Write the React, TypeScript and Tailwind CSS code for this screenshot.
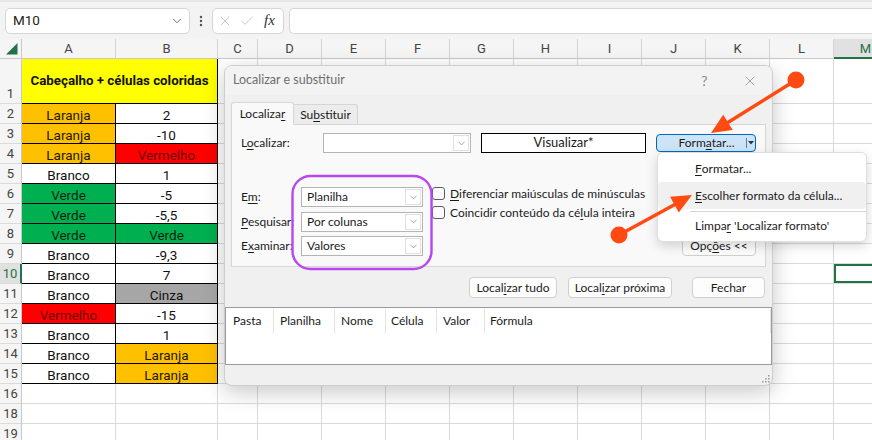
import type { ReactNode } from "react";
import { Check, ChevronDown, EllipsisVertical, X } from "lucide-react";

const U = ({ children }: { children: ReactNode }) => (
  <span className="underline decoration-1 underline-offset-[2px]">{children}</span>
);

const COLS = [
  { k: "A", w: "w-[94px]" },
  { k: "B", w: "w-[102px]" },
  { k: "C", w: "w-[40px]" },
  { k: "D", w: "w-[64px]" },
  { k: "E", w: "w-[64px]" },
  { k: "F", w: "w-[64px]" },
  { k: "G", w: "w-[64px]" },
  { k: "H", w: "w-[64px]" },
  { k: "I", w: "w-[64px]" },
  { k: "J", w: "w-[64px]" },
  { k: "K", w: "w-[64px]" },
  { k: "L", w: "w-[64px]" },
  { k: "M", w: "w-[64px]" },
];
const REST = COLS.slice(2);

const FILL: Record<string, string> = {
  o: "bg-[#ffc000] text-[#231a00]",
  r: "bg-[#ff0000] text-[#6a0000]",
  g: "bg-[#00b050] text-[#072410]",
  w: "bg-white text-[#111]",
  c: "bg-[#a6a6a6] text-[#111]",
};

const DATA: [number, string, string, string, string][] = [
  [2, "Laranja", "o", "2", "w"],
  [3, "Laranja", "o", "-10", "w"],
  [4, "Laranja", "o", "Vermelho", "r"],
  [5, "Branco", "w", "1", "w"],
  [6, "Verde", "g", "-5", "w"],
  [7, "Verde", "g", "-5,5", "w"],
  [8, "Verde", "g", "Verde", "g"],
  [9, "Branco", "w", "-9,3", "w"],
  [10, "Branco", "w", "7", "w"],
  [11, "Branco", "w", "Cinza", "c"],
  [12, "Vermelho", "r", "-15", "w"],
  [13, "Branco", "w", "1", "w"],
  [14, "Branco", "w", "Laranja", "o"],
  [15, "Branco", "w", "Laranja", "o"],
];

function RowHead({ n, active }: { n: number; active?: boolean }) {
  return (
    <div
      className={`flex w-[22px] shrink-0 items-end justify-center border-b border-[#dadada] pb-[1px] text-[13px] leading-[16px] ${
        active
          ? "border-r-2 border-r-[#217346] bg-[#e1e1e1] text-[#217346]"
          : "border-r border-r-[#c8c8c8] bg-[#f5f5f5] text-[#444]"
      }`}
    >
      {n}
    </div>
  );
}

function EmptyCells({ row }: { row: number }) {
  return (
    <>
      {REST.map((c) => (
        <div
          key={c.k}
          className={`${c.w} shrink-0 border-r border-b border-[#dadada] ${
            row === 10 && c.k === "M" ? "shadow-[inset_0_0_0_2px_#217346]" : ""
          }`}
        />
      ))}
    </>
  );
}

function FormulaBar() {
  return (
    <div className="flex h-[39px] items-center border-t-2 border-[#e6e6e6] bg-[#f3f3f3] pl-[5px]">
      <div className="flex h-[26px] w-[185px] items-center justify-between rounded-[5px] border border-[#d6d6d6] bg-white pl-[7px] pr-[5px] text-[13.5px] text-[#222]">
        <span>M10</span>
        <ChevronDown size={14} strokeWidth={1.4} color="#555" />
      </div>
      <div className="flex w-[22px] justify-center">
        <EllipsisVertical size={14} strokeWidth={2.2} color="#555" />
      </div>
      <div className="flex h-[26px] w-[72px] items-center rounded-[5px] border border-[#d6d6d6] bg-white pl-[4px]">
        <X size={16} strokeWidth={1.1} color="#b4b4b4" />
        <Check size={16} strokeWidth={1.1} color="#b4b4b4" className="ml-[6px]" />
        <span className="ml-[9px] font-['Liberation_Serif',serif] text-[15px] italic text-[#333]">fx</span>
      </div>
      <div className="ml-[5px] h-[26px] flex-1 rounded-l-[5px] border border-r-0 border-[#d6d6d6] bg-white" />
    </div>
  );
}

function Sheet() {
  return (
    <div className="flex flex-col text-[13.5px]">
      <div className="flex h-[20px] bg-[#f5f5f5] text-[13px] text-[#444]">
        <div className="relative w-[22px] shrink-0 border-r border-b border-[#c8c8c8]">
          <svg className="absolute left-[6px] top-[4px]" width="12" height="12">
            <polygon points="0,11.5 11.5,0 11.5,11.5" fill="#217346" />
          </svg>
        </div>
        {COLS.map((c) => (
          <div
            key={c.k}
            className={`${c.w} flex shrink-0 items-center justify-center border-r border-[#d4d4d4] pt-[1px] ${
              c.k === "M"
                ? "border-b-2 border-b-[#217346] bg-[#e1e1e1] text-[#217346]"
                : "border-b border-b-[#c8c8c8]"
            }`}
          >
            {c.k}
          </div>
        ))}
      </div>

      <div className="flex h-[45px]">
        <RowHead n={1} />
        <div className="flex w-[196px] shrink-0 items-center justify-center border-r border-b border-black bg-[#ffff00] text-[13.3px] font-bold text-[#111]">
          Cabeçalho + células coloridas
        </div>
        <EmptyCells row={1} />
      </div>

      {DATA.map(([n, a, fa, b, fb]) => (
        <div key={n} className="flex h-[20px]">
          <RowHead n={n} active={n === 10} />
          <div className={`flex w-[94px] shrink-0 items-end justify-center border-r border-b border-black leading-[16px] ${FILL[fa]}`}>
            {a}
          </div>
          <div className={`flex w-[102px] shrink-0 items-end justify-center border-r border-b border-black leading-[16px] ${FILL[fb]}`}>
            {b}
          </div>
          <EmptyCells row={n} />
        </div>
      ))}

      {[16, 18, 19].map((n) => (
        <div key={n} className="flex h-[20px]">
          <RowHead n={n} />
          <div className="w-[94px] shrink-0 border-r border-b border-[#dadada]" />
          <div className="w-[102px] shrink-0 border-r border-b border-[#dadada]" />
          <EmptyCells row={n} />
        </div>
      ))}
    </div>
  );
}

function Select({ value }: { value: string }) {
  return (
    <div className="flex h-[20px] w-[122px] items-stretch border border-[#b4b4b4] bg-white">
      <div className="flex flex-1 items-center pl-[5px]">{value}</div>
      <div className="m-px flex w-[16px] items-center justify-center border border-[#e0e0e0]">
        <ChevronDown size={11} strokeWidth={1.3} color="#666" />
      </div>
    </div>
  );
}

function Checkbox({ children }: { children: ReactNode }) {
  return (
    <div className="flex h-[13px] items-center">
      <div className="h-[13px] w-[13px] shrink-0 rounded-[3px] border border-[#5c5c5c] bg-[#fbfbfb]" />
      <span className="ml-[5px] whitespace-nowrap">{children}</span>
    </div>
  );
}

function FindDialog() {
  return (
    <div className="absolute left-[224px] top-[65px] flex h-[321px] w-[549px] flex-col overflow-hidden rounded-[8px] border border-[#cdcdcd] bg-[#f0f0f0] font-['Lato',sans-serif] text-[12px] text-[#1b1b1b] shadow-[0_6px_22px_rgba(0,0,0,0.22)]">
      <div className="flex h-[29px] shrink-0 items-center bg-[#f3f3f3] pl-[8px] text-[12.5px] text-[#6e6e6e]">
        <span>Localizar e substituir</span>
        <div className="ml-auto flex h-full">
          <span className="flex w-[45px] items-center justify-center text-[14px] text-[#8a8a8a]">?</span>
          <span className="flex w-[45px] items-center justify-center">
            <X size={16} strokeWidth={1.1} color="#8a8a8a" />
          </span>
        </div>
      </div>

      <div className="flex flex-col pl-[6px]">
        <div className="mt-[7px] flex h-[22px] items-end">
          <div className="relative z-10 -mb-px flex h-[23px] w-[63px] items-center justify-center rounded-t-[3px] border border-b-0 border-[#d6d6d6] bg-[#f9f9f9]">
            Localiza<U>r</U>
          </div>
          <div className="flex h-[20px] w-[64px] items-center justify-center rounded-tr-[3px] border border-b-0 border-l-0 border-[#d6d6d6] bg-[#ececec]">
            Su<U>b</U>stituir
          </div>
        </div>

        <div className="h-[143px] w-[535px] border border-[#d6d6d6] bg-[#f9f9f9] pt-[8px]">
          <div className="flex h-[20px] items-center pl-[9px]">
            <span className="w-[82px]">
              L<U>o</U>calizar:
            </span>
            <div className="flex h-[20px] w-[148px] items-stretch border border-[#b4b4b4] bg-white">
              <div className="flex-1" />
              <div className="m-px flex w-[16px] items-center justify-center border border-[#e0e0e0]">
                <ChevronDown size={11} strokeWidth={1.3} color="#666" />
              </div>
            </div>
            <div className="ml-[10px] flex h-[20px] w-[165px] items-center justify-center border border-black bg-white text-[13px]">
              Visualizar*
            </div>
            <div className="ml-[10px] flex h-[18px] w-[100px] items-stretch rounded-[4px] border border-[#0067c0] bg-[#cce4f7]">
              <div className="flex flex-1 items-center justify-center pl-[10px]">
                Form<U>a</U>tar...
              </div>
              <div className="my-[3px] w-px bg-[#5d7f9e]" />
              <div className="flex w-[8px] items-center justify-center">
                <svg width="6" height="4">
                  <polygon points="0,0 6,0 3,3.5" fill="#333" />
                </svg>
              </div>
            </div>
          </div>

          <div className="mt-[34px] flex h-[69px] pl-[9px] pr-[9px]">
            <div className="flex flex-col gap-[4.5px]">
              <div className="flex h-[20px] items-center">
                <span className="w-[60px]">
                  E<U>m</U>:
                </span>
                <Select value="Planilha" />
              </div>
              <div className="flex h-[20px] items-center">
                <span className="w-[60px]">
                  <U>P</U>esquisar:
                </span>
                <Select value="Por colunas" />
              </div>
              <div className="flex h-[20px] items-center">
                <span className="w-[60px]">
                  E<U>x</U>aminar:
                </span>
                <Select value="Valores" />
              </div>
            </div>
            <div className="ml-[9px] flex flex-col gap-[6px]">
              <Checkbox>
                <U>D</U>iferenciar maiúsculas de minúsculas
              </Checkbox>
              <Checkbox>
                Coincidir conteúdo da cé<U>l</U>ula inteira
              </Checkbox>
            </div>
            <div className="ml-auto flex h-[20px] w-[74px] items-center justify-center self-end rounded-[4px] border border-[#cfcfcf] bg-[#fdfdfd]">
              Opç<U>õ</U>es &lt;&lt;
            </div>
          </div>
        </div>
      </div>

      <div className="mt-[10px] flex h-[21px] pl-[244px]">
        <div className="flex w-[88px] items-center justify-center rounded-[4px] border border-[#d0d0d0] bg-[#fdfdfd]">
          Local<U>i</U>zar tudo
        </div>
        <div className="ml-[11px] flex w-[104px] items-center justify-center rounded-[4px] border border-[#d0d0d0] bg-[#fdfdfd]">
          Local<U>i</U>zar próxima
        </div>
        <div className="ml-[20px] flex w-[73px] items-center justify-center rounded-[4px] border border-[#d0d0d0] bg-[#fdfdfd]">
          Fechar
        </div>
      </div>

      <div className="mt-[9px] h-[58px] shrink-0 border border-[#9a9a9a] bg-white">
        <div className="mt-px flex h-[24px] items-stretch">
          <div className="flex w-[48px] items-center border-r border-[#e3e3e3] pl-[7px]">Pasta</div>
          <div className="flex w-[61px] items-center border-r border-[#e3e3e3] pl-[6px]">Planilha</div>
          <div className="flex w-[51px] items-center border-r border-[#e3e3e3] pl-[6px]">Nome</div>
          <div className="flex w-[51px] items-center border-r border-[#e3e3e3] pl-[5px]">Célula</div>
          <div className="flex w-[48px] items-center border-r border-[#e3e3e3] pl-[6px]">Valor</div>
          <div className="flex flex-1 items-center border-r border-[#e3e3e3] pl-[5px]">Fórmula</div>
        </div>
      </div>

      <div className="flex flex-1 items-end justify-end pb-[2px] pr-[2px]">
        <svg width="9" height="9">
          {[
            [7, 1],
            [4, 4],
            [7, 4],
            [1, 7],
            [4, 7],
            [7, 7],
          ].map(([x, y]) => (
            <rect key={`${x}-${y}`} x={x} y={y} width="1.5" height="1.5" fill="#9a9a9a" />
          ))}
        </svg>
      </div>
    </div>
  );
}

function FormatMenu() {
  return (
    <div className="absolute left-[657px] top-[152px] h-[90px] w-[210px] rounded-[6px] border border-[#dedede] bg-white pt-[2px] font-['Lato',sans-serif] text-[12px] text-[#1b1b1b] shadow-[0_4px_12px_rgba(0,0,0,0.16)]">
      <div className="flex h-[27px] items-center pl-[37px]">
        <U>F</U>ormatar...
      </div>
      <div className="flex h-[27px] items-center rounded-[4px] bg-[#f0f0f0] pl-[37px]">
        <U>E</U>scolher formato da célula...
      </div>
      <div className="ml-[32px] mt-[2px] h-px bg-[#d4d4d4]" />
      <div className="flex h-[28px] items-center whitespace-pre pl-[37px]">
        Limpa<U>r</U>{" 'Localizar formato'"}
      </div>
    </div>
  );
}

function Arrow({ x1, y1, x2, y2 }: { x1: number; y1: number; x2: number; y2: number }) {
  const dx = x2 - x1;
  const dy = y2 - y1;
  const len = Math.hypot(dx, dy);
  const ux = dx / len;
  const uy = dy / len;
  const bx = x2 - ux * 20;
  const by = y2 - uy * 20;
  const hw = 9;
  const p1 = `${bx - uy * hw},${by + ux * hw}`;
  const p2 = `${bx + uy * hw},${by - ux * hw}`;
  return (
    <g fill="#ff4a12" stroke="#ff4a12">
      <circle cx={x1} cy={y1} r="8.5" stroke="none" />
      <line x1={x1} y1={y1} x2={bx + ux * 2} y2={by + uy * 2} strokeWidth="3.4" />
      <polygon points={`${x2},${y2} ${p1} ${p2}`} stroke="none" />
    </g>
  );
}

function Annotations() {
  return (
    <svg className="pointer-events-none absolute left-0 top-0" width="872" height="440">
      <rect x="292.5" y="176" width="139" height="93" rx="18" fill="none" stroke="#b847ef" strokeWidth="2.4" />
      <Arrow x1={796} y1={80} x2={711} y2={133} />
      <Arrow x1={619} y1={235} x2={692} y2={195} />
    </svg>
  );
}

export default function App() {
  return (
    <div className="relative h-[440px] w-[872px] overflow-hidden bg-white font-['Roboto',sans-serif] text-[#222]">
      <FormulaBar />
      <Sheet />
      <FindDialog />
      <FormatMenu />
      <Annotations />
    </div>
  );
}
